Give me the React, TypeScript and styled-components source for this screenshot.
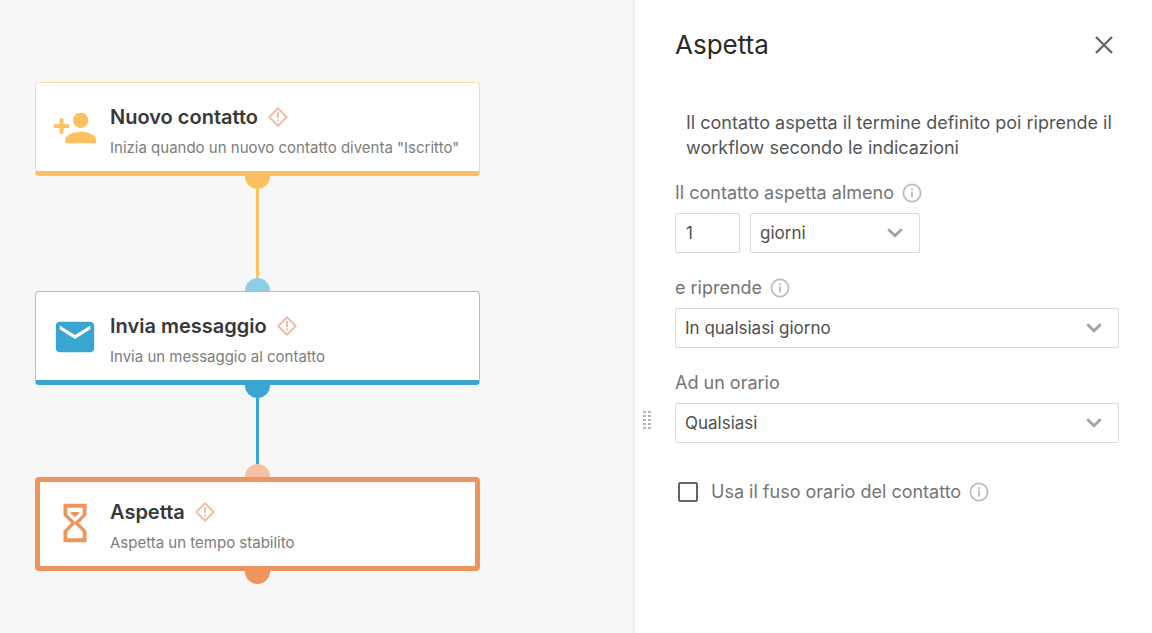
import React from "react";
import styled, { createGlobalStyle } from "styled-components";

const GlobalStyle = createGlobalStyle`
  *, *::before, *::after { box-sizing: border-box; }
  body {
    margin: 0;
    background: #fff;
    font-family: Inter, "Liberation Sans", sans-serif;
  }
`;

const Page = styled.div`
  display: flex;
  min-height: 100vh;
`;

const Canvas = styled.main`
  flex: 1;
  min-width: 0;
  padding: 82px 35px 40px;
  background: #f7f7f7;
`;

const Flow = styled.div`
  display: flex;
  flex-direction: column;
  align-items: center;
  width: 100%;
  max-width: 445px;
`;

const StepCard = styled.section<{ $color: string; $edge: string; $selected?: boolean }>`
  display: flex;
  align-items: center;
  width: 100%;
  height: 94px;
  padding: ${(p) => (p.$selected ? "0 12px 2px" : "2px 16px 0")};
  background: #fff;
  border: ${(p) => (p.$selected ? 5 : 1)}px solid ${(p) => p.$edge};
  border-bottom: 5px solid ${(p) => p.$color};
  border-radius: 4px;
`;

const StepIcon = styled.svg<{ $color: string }>`
  flex: none;
  width: 46px;
  height: 46px;
  margin-right: 12px;
  fill: ${(p) => p.$color};
`;

const StepText = styled.div`
  min-width: 0;
  padding-top: 6px;
  white-space: nowrap;
`;

const StepHead = styled.div`
  display: flex;
  align-items: center;
  gap: 10px;
`;

const StepTitle = styled.h2`
  margin: 0;
  font-size: 20px;
  font-weight: 600;
  line-height: 30px;
  color: #383838;
`;

const StepDescription = styled.p`
  margin: 4px 0 0;
  font-size: 15px;
  line-height: 24px;
  color: #7d7d7d;
`;

const Port = styled.span<{ $color: string; $side: "in" | "out" }>`
  width: 25px;
  height: 13px;
  background: ${(p) => p.$color};
  border-radius: ${(p) => (p.$side === "in" ? "13px 13px 0 0" : "0 0 13px 13px")};
`;

const Connector = styled.span<{ $color: string; $length: number }>`
  width: 3px;
  height: ${(p) => p.$length}px;
  background: ${(p) => p.$color};
`;

const Panel = styled.aside`
  display: flex;
  align-items: flex-start;
  flex: 0 0 519px;
  padding-right: 33px;
  border-left: 2px solid #ececec;
  background: #fff;
`;

const DragHandle = styled.button`
  flex: none;
  display: flex;
  width: 25px;
  margin: 411px 15px 0 0;
  padding: 0 0 0 8px;
  border: 0;
  background: none;
  cursor: col-resize;
`;

const Settings = styled.form`
  flex: 1;
  min-width: 0;
  padding-top: 28px;
`;

const PanelHeader = styled.header`
  display: flex;
  align-items: center;
  justify-content: space-between;
  height: 34px;
`;

const PanelTitle = styled.h1`
  margin: 0;
  font-size: 26px;
  font-weight: 400;
  line-height: 34px;
  color: #2a2a2a;
`;

const CloseButton = styled.button`
  display: flex;
  padding: 5px;
  border: 0;
  background: none;
  color: #666;
  cursor: pointer;
`;

const Intro = styled.p`
  margin: 48px 0 21px;
  padding-left: 11px;
  font-size: 18px;
  line-height: 25px;
  color: #555;
`;

const FieldList = styled.div`
  display: flex;
  flex-direction: column;
  gap: 23px;
`;

const LabelRow = styled.div`
  display: flex;
  align-items: center;
  gap: 8px;
  height: 24px;
  margin-bottom: 8px;
  font-size: 18px;
  line-height: 24px;
  color: #757575;
`;

const Controls = styled.div`
  display: flex;
  gap: 10px;
`;

const NumberInput = styled.input`
  width: 65px;
  height: 40px;
  padding: 0 10px;
  border: 1px solid #dadada;
  border-radius: 2px;
  background: #fff;
  font: 17px Inter, "Liberation Sans", sans-serif;
  color: #505050;
  outline: none;
`;

const SelectWrap = styled.div<{ $width: string }>`
  position: relative;
  width: ${(p) => p.$width};
`;

const Select = styled.select`
  display: block;
  width: 100%;
  height: 40px;
  padding: 0 40px 0 9px;
  border: 1px solid #dadada;
  border-radius: 2px;
  background: #fff;
  appearance: none;
  font: 17px Inter, "Liberation Sans", sans-serif;
  color: #505050;
  outline: none;
`;

const Chevron = styled.svg`
  position: absolute;
  top: 15px;
  right: 17px;
  pointer-events: none;
`;

const CheckRow = styled.div`
  display: flex;
  align-items: center;
  margin-top: 37px;
  padding-left: 3px;
  font-size: 18px;
  line-height: 24px;
  color: #757575;
`;

const Checkbox = styled.input`
  appearance: none;
  width: 20px;
  height: 20px;
  margin: 0 13px 0 0;
  border: 2px solid #666;
  border-radius: 2px;
  background: #fff;
`;

const CheckLabel = styled.label`
  margin-right: 8px;
`;

const WarningIcon = () => (
  <svg width="20" height="20" viewBox="0 0 20 20" fill="none" stroke="#efbfa4" strokeWidth="2">
    <path d="M10 1.3 18.7 10 10 18.7 1.3 10Z" strokeLinejoin="round" />
    <path d="M10 5v6M10 12.5v2" />
  </svg>
);

const InfoIcon = () => (
  <svg width="20" height="20" viewBox="0 0 20 20" fill="none" stroke="#bcbcbc">
    <circle cx="10" cy="10" r="8.6" strokeWidth="1.8" />
    <path d="M10 8.5v6M10 5.2v2" strokeWidth="1.8" />
  </svg>
);

const ChevronIcon = () => (
  <Chevron width="16" height="10" viewBox="0 0 16 10" fill="none" stroke="#a3a3a3" strokeWidth="2.8">
    <path d="M1.3 1.3 8 7.8l6.7-6.5" />
  </Chevron>
);

const PersonAdd = () => (
  <path d="M15 12c2.21 0 4-1.79 4-4s-1.79-4-4-4-4 1.79-4 4 1.79 4 4 4zm-9-2V7H4v3H1v2h3v3h2v-3h3v-2H6zm9 4c-2.67 0-8 1.34-8 4v2h16v-2c0-2.66-5.33-4-8-4z" />
);

const Mail = () => (
  <path d="M20 4H4c-1.1 0-1.99.9-1.99 2L2 18c0 1.1.9 2 2 2h16c1.1 0 2-.9 2-2V6c0-1.1-.9-2-2-2zm0 4l-8 5-8-5V6l8 5 8-5v2z" />
);

const Hourglass = () => (
  <>
    <path d="M6 2v6l4 4-4 4v6h12v-6l-4-4 4-4V2H6zm10 14.5V20H8v-3.5l4-4 4 4zm-4-5l-4-4V4h8v3.5l-4 4z" />
    <path d="M9.8 6.2h4.4v.8L12 9 9.8 7z" />
  </>
);

type StepProps = {
  title: string;
  description: string;
  color: string;
  edge: string;
  selected?: boolean;
  children: React.ReactNode;
};

const Step = ({ title, description, color, edge, selected, children }: StepProps) => (
  <StepCard $color={color} $edge={edge} $selected={selected}>
    <StepIcon viewBox="0 0 24 24" $color={color} aria-hidden="true">
      {children}
    </StepIcon>
    <StepText>
      <StepHead>
        <StepTitle>{title}</StepTitle>
        <WarningIcon />
      </StepHead>
      <StepDescription>{description}</StepDescription>
    </StepText>
  </StepCard>
);

const yellow = "#fbc05f";
const blue = "#38a6d0";
const orange = "#ee945d";

export default function App() {
  return (
    <>
      <GlobalStyle />
      <Page>
        <Canvas>
          <Flow>
            <Step title="Nuovo contatto" description={'Inizia quando un nuovo contatto diventa "Iscritto"'} color={yellow} edge="#fddca4">
              <PersonAdd />
            </Step>
            <Port $color={yellow} $side="out" />
            <Connector $color={yellow} $length={89} />
            <Port $color="#8fcde4" $side="in" />
            <Step title="Invia messaggio" description="Invia un messaggio al contatto" color={blue} edge="#8bcde5">
              <Mail />
            </Step>
            <Port $color={blue} $side="out" />
            <Connector $color={blue} $length={66} />
            <Port $color="#f5c1a3" $side="in" />
            <Step title="Aspetta" description="Aspetta un tempo stabilito" color={orange} edge={orange} selected>
              <Hourglass />
            </Step>
            <Port $color={orange} $side="out" />
          </Flow>
        </Canvas>
        <Panel>
          <DragHandle type="button" aria-label="Ridimensiona">
            <svg width="8" height="19" viewBox="0 0 8 19" fill="#b4b4b8">
              {[0, 4, 8, 12, 16].map((y) => (
                <path key={y} d={`M0 ${y}h3v2H0zM5 ${y}h3v2H5z`} />
              ))}
            </svg>
          </DragHandle>
          <Settings>
            <PanelHeader>
              <PanelTitle>Aspetta</PanelTitle>
              <CloseButton type="button" aria-label="Chiudi">
                <svg width="20" height="20" viewBox="0 0 20 20" stroke="currentColor" strokeWidth="2.4">
                  <path d="M2 2l16 16M18 2 2 18" />
                </svg>
              </CloseButton>
            </PanelHeader>
            <Intro>Il contatto aspetta il termine definito poi riprende il workflow secondo le indicazioni</Intro>
            <FieldList>
              <div>
                <LabelRow>
                  <label htmlFor="amount">Il contatto aspetta almeno</label>
                  <InfoIcon />
                </LabelRow>
                <Controls>
                  <NumberInput id="amount" type="text" inputMode="numeric" defaultValue="1" />
                  <SelectWrap $width="170px">
                    <Select aria-label="Unità di tempo">
                      <option>giorni</option>
                    </Select>
                    <ChevronIcon />
                  </SelectWrap>
                </Controls>
              </div>
              <div>
                <LabelRow>
                  <label htmlFor="day">e riprende</label>
                  <InfoIcon />
                </LabelRow>
                <SelectWrap $width="100%">
                  <Select id="day">
                    <option>In qualsiasi giorno</option>
                  </Select>
                  <ChevronIcon />
                </SelectWrap>
              </div>
              <div>
                <LabelRow>
                  <label htmlFor="time">Ad un orario</label>
                </LabelRow>
                <SelectWrap $width="100%">
                  <Select id="time">
                    <option>Qualsiasi</option>
                  </Select>
                  <ChevronIcon />
                </SelectWrap>
              </div>
            </FieldList>
            <CheckRow>
              <Checkbox id="timezone" type="checkbox" />
              <CheckLabel htmlFor="timezone">Usa il fuso orario del contatto</CheckLabel>
              <InfoIcon />
            </CheckRow>
          </Settings>
        </Panel>
      </Page>
    </>
  );
}
